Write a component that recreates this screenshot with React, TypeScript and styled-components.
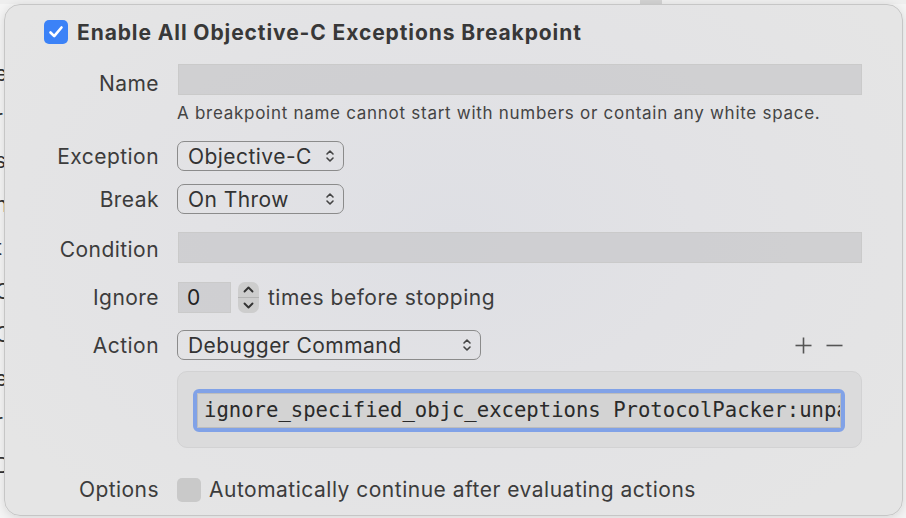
import styled, { createGlobalStyle } from "styled-components";

const GlobalStyle = createGlobalStyle`
  html, body {
    margin: 0;
    padding: 0;
    background: #f3f3f3;
  }
  body {
    font-family: Inter, "Noto Sans", "Liberation Sans", sans-serif;
    -webkit-font-smoothing: antialiased;
  }
`;

const Screen = styled.div`
  position: relative;
  width: 906px;
  height: 518px;
  overflow: hidden;
  background: #f4f4f4;
`;

const TopStrip = styled.div`
  display: flex;
  height: 4px;
  background: #eeeeee;
  .thumb {
    margin-left: 640px;
    width: 22px;
    background: #d2d2d2;
  }
`;

const Backdrop = styled.div`
  display: flex;
  flex-direction: column;
  padding-top: 48px;
  .peek {
    height: 43.5px;
    margin-left: -5px;
    font-size: 21px;
    line-height: 43px;
    color: #333;
  }
`;

/* the popover floats over the list behind it */
const Popover = styled.div`
  position: absolute;
  left: 4px;
  top: 4px;
  width: 899px;
  height: 512px;
  box-sizing: border-box;
  border: 1px solid #c6c6c6;
  border-radius: 16px;
  padding: 15px 40px 0 15px;
  background: radial-gradient(
    ellipse 60% 70% at 50% 45%,
    #dedfe4 0%,
    #e2e2e5 45%,
    #e5e5e5 100%
  );
  box-shadow: 0 2px 10px rgba(0, 0, 0, 0.12);
  color: #3a3a3a;
`;

const Header = styled.div`
  display: flex;
  align-items: center;
  gap: 9px;
  margin-left: 24px;
  height: 24px;
  h1 {
    margin: 0;
    font-size: 21px;
    font-weight: 700;
    color: #383838;
    letter-spacing: 0.9px;
  }
`;

const Check = styled.div<{ $on?: boolean }>`
  flex: none;
  width: 24px;
  height: 24px;
  border-radius: 5px;
  display: flex;
  align-items: center;
  justify-content: center;
  background: ${(p) => (p.$on ? "#3b82f7" : "#c9c9c9")};
`;

const Row = styled.div<{ $top: number }>`
  display: grid;
  grid-template-columns: 139px minmax(0, 1fr);
  column-gap: 18px;
  align-items: center;
  margin-top: ${(p) => p.$top}px;
`;

const Label = styled.div<{ $shift?: number }>`
  text-align: right;
  font-size: 21px;
  letter-spacing: 0.45px;
  color: #3c3c3c;
  transform: translateY(${(p) => p.$shift || 0}px);
`;

const TextField = styled.div<{ $width?: number }>`
  height: 31px;
  width: ${(p) => (p.$width ? `${p.$width}px` : "auto")};
  margin-left: 1px;
  box-sizing: border-box;
  background: rgba(200, 200, 202, 0.7);
  border: 1px solid #cacaca;
  font-size: 21px;
  color: #222;
  line-height: 29px;
  padding-left: 8px;
`;

const Hint = styled.div`
  grid-column: 2;
  font-size: 17px;
  letter-spacing: 0.72px;
  color: #444;
  line-height: 20px;
`;

const PopUp = styled.div<{ $width: number }>`
  width: ${(p) => p.$width}px;
  height: 30px;
  box-sizing: border-box;
  border: 1.5px solid #8b8b8b;
  border-radius: 7px;
  display: flex;
  align-items: center;
  justify-content: space-between;
  padding: 0 8px 0 10px;
  font-size: 21px;
  letter-spacing: 0.45px;
  color: #333;
`;

const Inline = styled.div`
  display: flex;
  align-items: center;
  gap: 8px;
  font-size: 21px;
  letter-spacing: 0.5px;
  color: #3c3c3c;
`;

const Stepper = styled.div`
  width: 21px;
  height: 31px;
  border-radius: 7px;
  background: #cdcdcd;
  display: flex;
  flex-direction: column;
  align-items: center;
  justify-content: space-between;
  padding: 4px 0;
  box-sizing: border-box;
  margin-left: -1px;
  margin-right: 1px;
  position: relative;
  &::after {
    content: "";
    position: absolute;
    left: 0;
    right: 0;
    top: 15px;
    height: 1px;
    background: #b4b4b4;
  }
`;

const ActionLine = styled.div`
  display: flex;
  align-items: center;
  justify-content: space-between;
  padding-right: 19px;
  .pm {
    display: flex;
    gap: 14px;
  }
`;

const CommandBox = styled.div`
  grid-column: 2;
  height: 77px;
  box-sizing: border-box;
  border-radius: 10px;
  background: #dbdbdc;
  border: 1px solid #d2d2d3;
  padding: 17px 16px 0 15px;
`;

const FocusField = styled.div`
  height: 43px;
  box-sizing: border-box;
  border: 4px solid #81a2e7;
  border-radius: 6px;
  overflow: hidden;
  .inner {
    height: 100%;
    box-sizing: border-box;
    background: #d3d3d3;
    border: 1px solid #bdbdbd;
    padding-left: 6px;
    font-family: "DejaVu Sans Mono", "Liberation Mono", monospace;
    font-size: 20.6px;
    line-height: 33px;
    color: #2a2a2a;
    white-space: nowrap;
    overflow: hidden;
  }
`;

const Chevrons = () => (
  <svg width="10" height="16" viewBox="0 0 10 16" fill="none">
    <path d="M2 6 L5 3 L8 6" stroke="#444" strokeWidth="1.6" strokeLinecap="round" strokeLinejoin="round" />
    <path d="M2 10 L5 13 L8 10" stroke="#444" strokeWidth="1.6" strokeLinecap="round" strokeLinejoin="round" />
  </svg>
);

const Chevron = ({ up }: { up?: boolean }) => (
  <svg width="11" height="7" viewBox="0 0 11 7" fill="none">
    <path
      d={up ? "M1.5 5.5 L5.5 1.5 L9.5 5.5" : "M1.5 1.5 L5.5 5.5 L9.5 1.5"}
      stroke="#333"
      strokeWidth="1.9"
      strokeLinecap="round"
      strokeLinejoin="round"
    />
  </svg>
);

const PlusMinus = ({ minus }: { minus?: boolean }) => (
  <svg width="17" height="17" viewBox="0 0 17 17" fill="none">
    <path d="M0.5 8.5 H16.5" stroke="#555" strokeWidth="1.6" />
    {!minus && <path d="M8.5 0.5 V16.5" stroke="#555" strokeWidth="1.6" />}
  </svg>
);

const peeks = ["e", "r", "s", "n", "t", "C", "C", "e", "r", "D"];

const App = () => {
  return (
    <Screen>
      <GlobalStyle />
      <TopStrip>
        <div className="thumb" />
      </TopStrip>
      <Backdrop>
        {peeks.map((c, i) => (
          <div className="peek" key={i}>
            {c}
          </div>
        ))}
      </Backdrop>
      <Popover>
        <Header>
          <Check $on>
            <svg width="16" height="14" viewBox="0 0 16 14" fill="none">
              <path d="M2.5 7.5 L6.2 11.2 L13.5 2.5" stroke="#fff" strokeWidth="2.6" strokeLinecap="round" strokeLinejoin="round" />
            </svg>
          </Check>
          <h1>Enable All Objective-C Exceptions Breakpoint</h1>
        </Header>

        <Row $top={20}>
          <Label $shift={4}>Name</Label>
          <TextField />
        </Row>
        <Row $top={8}>
          <Hint>A breakpoint name cannot start with numbers or contain any white space.</Hint>
        </Row>

        <Row $top={18}>
          <Label>Exception</Label>
          <PopUp $width={167}>
            Objective-C
            <Chevrons />
          </PopUp>
        </Row>
        <Row $top={13}>
          <Label>Break</Label>
          <PopUp $width={167}>
            On Throw
            <Chevrons />
          </PopUp>
        </Row>

        <Row $top={18}>
          <Label $shift={2}>Condition</Label>
          <TextField />
        </Row>

        <Row $top={19}>
          <Label>Ignore</Label>
          <Inline>
            <TextField $width={53}>0</TextField>
            <Stepper>
              <Chevron up />
              <Chevron />
            </Stepper>
            times before stopping
          </Inline>
        </Row>

        <Row $top={17}>
          <Label>Action</Label>
          <ActionLine>
            <PopUp $width={304}>
              Debugger Command
              <Chevrons />
            </PopUp>
            <div className="pm">
              <PlusMinus />
              <PlusMinus minus />
            </div>
          </ActionLine>
        </Row>
        <Row $top={11}>
          <CommandBox>
            <FocusField>
              <div className="inner">ignore_specified_objc_exceptions ProtocolPacker:unpack</div>
            </FocusField>
          </CommandBox>
        </Row>

        <Row $top={29}>
          <Label>Options</Label>
          <Inline>
            <Check />
            Automatically continue after evaluating actions
          </Inline>
        </Row>
      </Popover>
    </Screen>
  );
};

export default App;
